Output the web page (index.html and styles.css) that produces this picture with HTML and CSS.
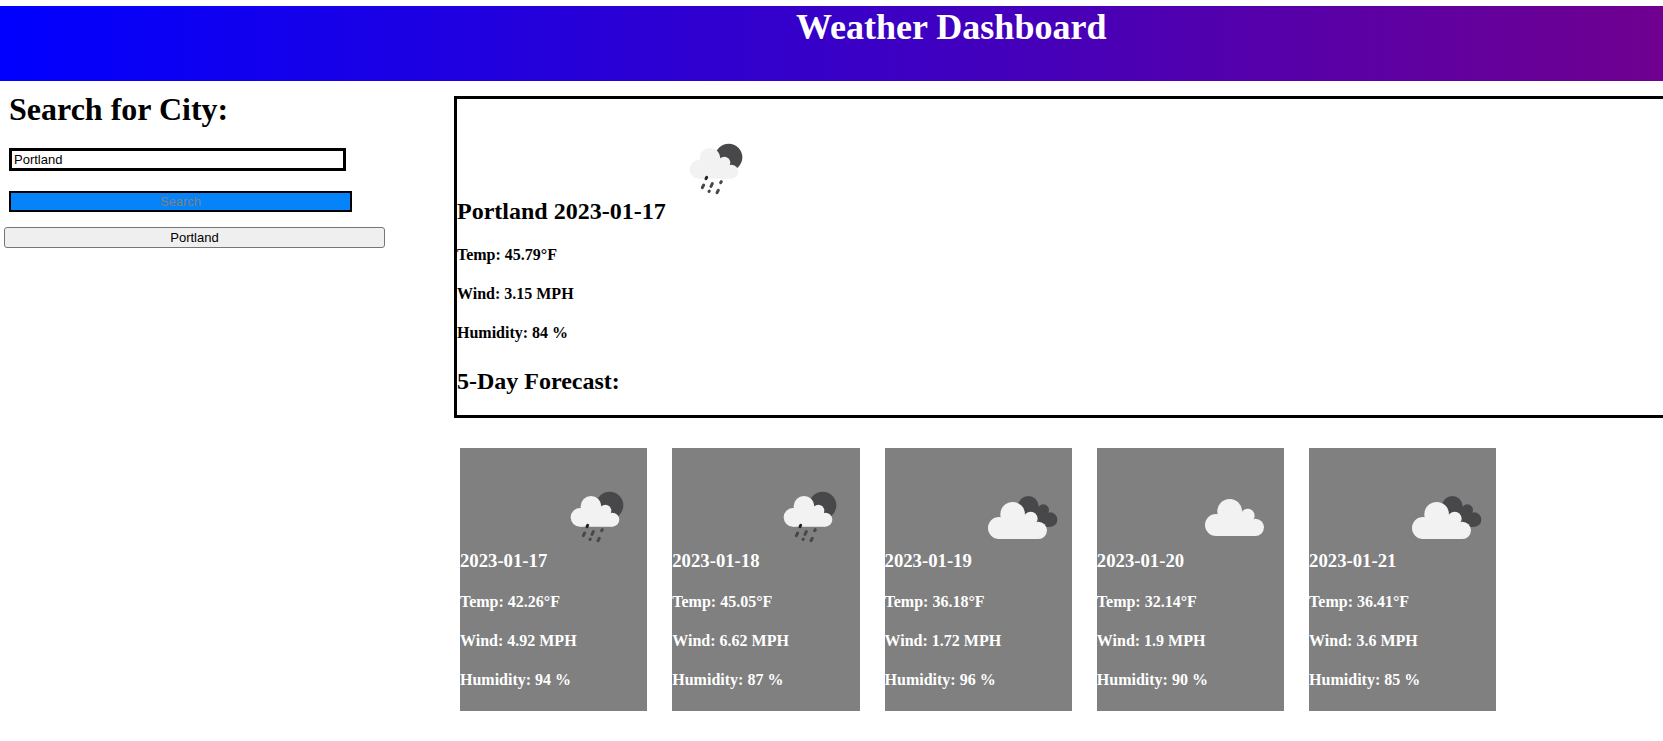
FILE: index.html
```html
<!DOCTYPE html>
<html lang="en">
<head>
<meta charset="utf-8">
<title>Weather Dashboard</title>
<link rel="stylesheet" href="styles.css">
</head>
<body>
<svg class="sprite" aria-hidden="true">
  <symbol id="cloud-shape" viewBox="0 0 300 300">
    <circle cx="72" cy="156" r="33"/>
    <circle cx="113" cy="115" r="37"/>
    <circle cx="167" cy="128" r="21"/>
    <circle cx="190" cy="163" r="26"/>
    <path d="M72 189V135l41-20 54 10 10 20 13 10v34z"/>
  </symbol>
  <symbol id="rain" viewBox="0 0 100 100">
    <g transform="translate(13 9) scale(.3333)">
      <circle cx="149" cy="88" r="41" fill="#48484a"/>
      <g fill="#f2f2f2">
        <circle cx="60" cy="124" r="28"/>
        <circle cx="93" cy="91" r="31"/>
        <circle cx="136" cy="104" r="18"/>
        <circle cx="157" cy="131" r="21"/>
        <path d="M60 152v-40l33-21 43 10 8 12 13 8v31z"/>
      </g>
      <g stroke="#48484a" stroke-width="9" stroke-linecap="round">
        <path d="M81 152l2-4" stroke="#222"/>
        <path d="M70 179l4-8M96 175l4-8M125 164l2-3M90 190l1-1M114 194l4-7"/>
      </g>
    </g>
  </symbol>
  <symbol id="clouds" viewBox="0 0 100 100">
    <g transform="translate(3 9) scale(.3333)">
      <g fill="#48484a">
        <circle cx="160" cy="91" r="31"/>
        <circle cx="205" cy="102" r="17"/>
        <circle cx="225" cy="131" r="22"/>
        <path d="M160 91l45 5 10 20 10 37h-75z"/>
      </g>
      <use href="#cloud-shape" width="300" height="300" fill="#f2f2f2"/>
    </g>
  </symbol>
  <symbol id="cloud" viewBox="0 0 100 100">
    <g transform="translate(8 6) scale(.3333)">
      <use href="#cloud-shape" width="300" height="300" fill="#f2f2f2"/>
    </g>
  </symbol>
</svg>

<header class="banner"><h1 class="banner-title">Weather Dashboard</h1></header>

<div class="layout">
  <aside class="sidebar">
    <form class="search">
      <h1 class="search-title"><label for="city">Search for City:</label></h1>
      <input class="search-input" id="city" type="text" value="Portland">
      <button class="search-button" type="button">Search</button>
    </form>
    <button class="history-button" type="button">Portland</button>
  </aside>

  <main class="content">
    <section class="current">
      <h2 class="place">Portland 2023-01-17<svg class="icon" role="img" aria-label="Rain"><use href="#rain"/></svg></h2>
      <h4 class="reading">Temp: 45.79°F</h4>
      <h4 class="reading">Wind: 3.15 MPH</h4>
      <h4 class="reading">Humidity: 84 %</h4>
      <h2 class="forecast-title">5-Day Forecast:</h2>
    </section>

    <section class="forecast">
      <article class="card">
        <h3 class="date">2023-01-17<svg class="icon" role="img" aria-label="Rain"><use href="#rain"/></svg></h3>
        <h4 class="reading">Temp: 42.26°F</h4>
        <h4 class="reading">Wind: 4.92 MPH</h4>
        <h4 class="reading">Humidity: 94 %</h4>
      </article>
      <article class="card">
        <h3 class="date">2023-01-18<svg class="icon" role="img" aria-label="Rain"><use href="#rain"/></svg></h3>
        <h4 class="reading">Temp: 45.05°F</h4>
        <h4 class="reading">Wind: 6.62 MPH</h4>
        <h4 class="reading">Humidity: 87 %</h4>
      </article>
      <article class="card">
        <h3 class="date">2023-01-19<svg class="icon" role="img" aria-label="Broken clouds"><use href="#clouds"/></svg></h3>
        <h4 class="reading">Temp: 36.18°F</h4>
        <h4 class="reading">Wind: 1.72 MPH</h4>
        <h4 class="reading">Humidity: 96 %</h4>
      </article>
      <article class="card">
        <h3 class="date">2023-01-20<svg class="icon" role="img" aria-label="Cloudy"><use href="#cloud"/></svg></h3>
        <h4 class="reading">Temp: 32.14°F</h4>
        <h4 class="reading">Wind: 1.9 MPH</h4>
        <h4 class="reading">Humidity: 90 %</h4>
      </article>
      <article class="card">
        <h3 class="date">2023-01-21<svg class="icon" role="img" aria-label="Broken clouds"><use href="#clouds"/></svg></h3>
        <h4 class="reading">Temp: 36.41°F</h4>
        <h4 class="reading">Wind: 3.6 MPH</h4>
        <h4 class="reading">Humidity: 85 %</h4>
      </article>
    </section>
  </main>
</div>
</body>
</html>
```
FILE: styles.css
```css
* {
  box-sizing: border-box;
}

body {
  margin: 0;
  padding-top: 6px;
  background: #fff;
  color: #000;
  font-family: "Liberation Serif", "Times New Roman", serif;
}

.sprite {
  display: none;
}

.banner {
  padding: 0 0 32px 14.4%;
  background: linear-gradient(to right, blue, purple 114.4%);
  color: #fff;
  text-align: center;
}

.banner-title {
  margin: 0;
  font-size: 36px;
  line-height: 43px;
}

.layout {
  display: grid;
  grid-template-columns: 27.3% 1fr;
}

.sidebar {
  display: flex;
  flex-direction: column;
  align-items: flex-start;
  gap: 15px;
  padding: 10px 69px 0 4px;
}

.search {
  display: flex;
  flex-direction: column;
  gap: 20px;
  width: 100%;
  padding: 0 33px 0 5px;
}

.search-title {
  margin: 0;
  font-size: 32px;
  line-height: 37px;
}

.search-input,
.search-button,
.history-button {
  font-family: "Liberation Sans", Arial, sans-serif;
  font-size: 13px;
  line-height: 15px;
}

.search-input {
  height: 23px;
  margin-right: 6px;
  padding: 1px 2px;
  border: 3px solid #000;
  border-radius: 0;
  background: #fff;
  color: #000;
}

.search-button {
  height: 21px;
  padding: 0;
  border: 2px solid #000;
  background: #0583f8;
  color: gray;
}

.history-button {
  width: 100%;
  height: 21px;
  padding: 0;
  border: 1px solid #767676;
  border-radius: 3px;
  background: #efefef;
  color: #000;
}

.content {
  padding-top: 15px;
}

.current {
  display: flow-root;
  border: 3px solid #000;
  border-right: 0;
}

.place,
.forecast-title {
  margin: 20px 0;
  font-size: 24px;
}

.forecast-title {
  margin-top: 26px;
}

.icon {
  width: 100px;
  height: 100px;
}

.reading {
  margin: 21px 0;
  font-size: 16px;
  line-height: 18px;
}

.forecast {
  display: flex;
  gap: 25px;
  padding: 30px 6px 0;
}

.card {
  display: flow-root;
  padding-bottom: 1px;
  background: gray;
  color: #fff;
}

.date {
  margin: 19px 0;
  white-space: nowrap;
}
```
